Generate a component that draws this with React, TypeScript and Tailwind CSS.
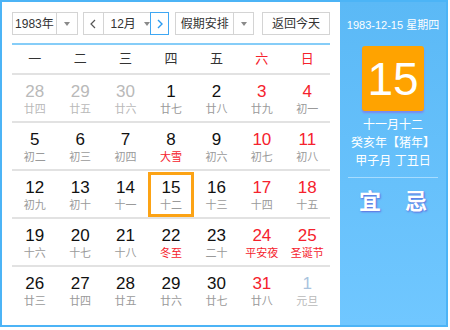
type Day = {
    n: number;
    l: string;
    kind?: 'prev' | 'next';
    red?: boolean;
    fest?: boolean;
    sel?: boolean;
};

const weeks: Day[][] = [
    [
        { n: 28, l: '廿四', kind: 'prev' },
        { n: 29, l: '廿五', kind: 'prev' },
        { n: 30, l: '廿六', kind: 'prev' },
        { n: 1, l: '廿七' },
        { n: 2, l: '廿八' },
        { n: 3, l: '廿九', red: true },
        { n: 4, l: '初一', red: true }
    ],
    [
        { n: 5, l: '初二' },
        { n: 6, l: '初三' },
        { n: 7, l: '初四' },
        { n: 8, l: '大雪', fest: true },
        { n: 9, l: '初六' },
        { n: 10, l: '初七', red: true },
        { n: 11, l: '初八', red: true }
    ],
    [
        { n: 12, l: '初九' },
        { n: 13, l: '初十' },
        { n: 14, l: '十一' },
        { n: 15, l: '十二', sel: true },
        { n: 16, l: '十三' },
        { n: 17, l: '十四', red: true },
        { n: 18, l: '十五', red: true }
    ],
    [
        { n: 19, l: '十六' },
        { n: 20, l: '十七' },
        { n: 21, l: '十八' },
        { n: 22, l: '冬至', fest: true },
        { n: 23, l: '二十' },
        { n: 24, l: '平安夜', red: true, fest: true },
        { n: 25, l: '圣诞节', red: true, fest: true }
    ],
    [
        { n: 26, l: '廿三' },
        { n: 27, l: '廿四' },
        { n: 28, l: '廿五' },
        { n: 29, l: '廿六' },
        { n: 30, l: '廿七' },
        { n: 31, l: '廿八', red: true },
        { n: 1, l: '元旦', kind: 'next' }
    ]
];

const weekdays = ['一', '二', '三', '四', '五', '六', '日'];

function Caret() {
    return (
        <span className="w-0 h-0 border-x-[3.5px] border-x-transparent border-t-[4px] border-t-[#8a8a8a]" />
    );
}

function DayCell({ d }: { d: Day }) {
    let numColor = 'text-[#111]';
    if (d.kind === 'prev') numColor = 'text-[#b9b9b9]';
    else if (d.kind === 'next') numColor = 'text-[#a9c3de]';
    else if (d.red) numColor = 'text-[#f5222d]';

    let lunarColor = 'text-[#9a9a9a]';
    if (d.kind) lunarColor = 'text-[#b9b9b9]';
    if (d.fest) lunarColor = 'text-[#f5222d]';

    return (
        <div
            className={
                d.sel
                    ? 'flex flex-col items-center mt-[1px] h-[45px] pt-[4px] border-[3px] border-[#fca315]'
                    : 'flex flex-col items-center pt-[8px]'
            }
        >
            <span className={`text-[17px] leading-[18px] ${numColor}`}>
                {d.n}
            </span>
            <span className={`text-[11px] leading-[16px] ${lunarColor}`}>
                {d.l}
            </span>
        </div>
    );
}

export default function App() {
    return (
        <div className="w-[450px] h-[330px] bg-white font-['Liberation_Sans','Noto_Sans_CJK_SC',sans-serif]">
            <div className="flex w-[448px] h-[327px] border-2 border-[#4cb4f6]">
                <div className="w-[338px] bg-white px-[10px] pt-[10px]">
                    <div className="flex items-center h-[23px] text-[12px] text-[#333]">
                        <div className="flex h-full w-[66px] border border-[#d4d4d4]">
                            <span className="flex-1 flex items-center justify-center border-r border-[#d4d4d4]">
                                1983年
                            </span>
                            <span className="w-[20px] flex items-center justify-center">
                                <Caret />
                            </span>
                        </div>
                        <div className="flex h-full w-[87px] ml-[5px] border border-[#d4d4d4]">
                            <span className="w-[20px] flex items-center justify-center border-r border-[#d4d4d4]">
                                <svg width="6" height="10" viewBox="0 0 6 10">
                                    <polyline
                                        points="5,1 1,5 5,9"
                                        fill="none"
                                        stroke="#555"
                                        strokeWidth="1.2"
                                    />
                                </svg>
                            </span>
                            <span className="flex-1 flex items-center justify-center gap-[8px] pl-[6px]">
                                12月
                                <Caret />
                            </span>
                            <span className="w-[19px] -my-px -mr-px flex items-center justify-center border border-[#3fa7f3]">
                                <svg width="6" height="10" viewBox="0 0 6 10">
                                    <polyline
                                        points="1,1 5,5 1,9"
                                        fill="none"
                                        stroke="#2c9bf0"
                                        strokeWidth="1.4"
                                    />
                                </svg>
                            </span>
                        </div>
                        <div className="flex h-full w-[79px] ml-[6px] border border-[#d4d4d4]">
                            <span className="flex-1 flex items-center justify-center border-r border-[#d4d4d4]">
                                假期安排
                            </span>
                            <span className="w-[19px] flex items-center justify-center">
                                <Caret />
                            </span>
                        </div>
                        <div className="flex h-full w-[68px] ml-[8px] items-center justify-center border border-[#d4d4d4]">
                            返回今天
                        </div>
                    </div>

                    <div className="mt-[8px] h-[2px] bg-[#86cdf8]" />

                    <div className="grid grid-cols-7 h-[30px] border-b-2 border-[#e2e2e2] text-[13px]">
                        {weekdays.map((w, i) => (
                            <span
                                key={w}
                                className={`flex items-center justify-center ${i >= 5 ? 'text-[#f5222d]' : 'text-[#333]'}`}
                            >
                                {w}
                            </span>
                        ))}
                    </div>

                    {weeks.map((week, wi) => (
                        <div
                            key={wi}
                            className={`grid grid-cols-7 h-[48px] ${wi < 4 ? 'border-b-2 border-[#e2e2e2]' : ''}`}
                        >
                            {week.map((d, di) => (
                                <DayCell key={di} d={d} />
                            ))}
                        </div>
                    ))}
                </div>

                <div className="flex-1 flex flex-col items-center bg-gradient-to-b from-[#5bb9f6] to-[#70c7ff] text-white">
                    <div className="mt-[16px] text-[11px] leading-[14px]">
                        1983-12-15 星期四
                    </div>
                    <div className="mt-[14px] w-[62px] h-[65px] rounded-[3px] bg-[#ffa300] shadow-[0_2px_2px_#7b88ee] flex items-center justify-center text-[46px] leading-none font-['Liberation_Sans',sans-serif]">
                        15
                    </div>
                    <div className="mt-[5px] flex flex-col items-center text-[12px] leading-[18px]">
                        <span>十一月十二</span>
                        <span>癸亥年【猪年】</span>
                        <span>甲子月 丁丑日</span>
                    </div>
                    <div className="mt-[7px] w-[90px] h-px bg-[#a6dcff]" />
                    <div className="mt-[11px] flex gap-[24px] text-[22px] leading-[26px] font-bold [text-shadow:1px_1px_2px_#5f69dc]">
                        <span>宜</span>
                        <span>忌</span>
                    </div>
                </div>
            </div>
        </div>
    );
}
